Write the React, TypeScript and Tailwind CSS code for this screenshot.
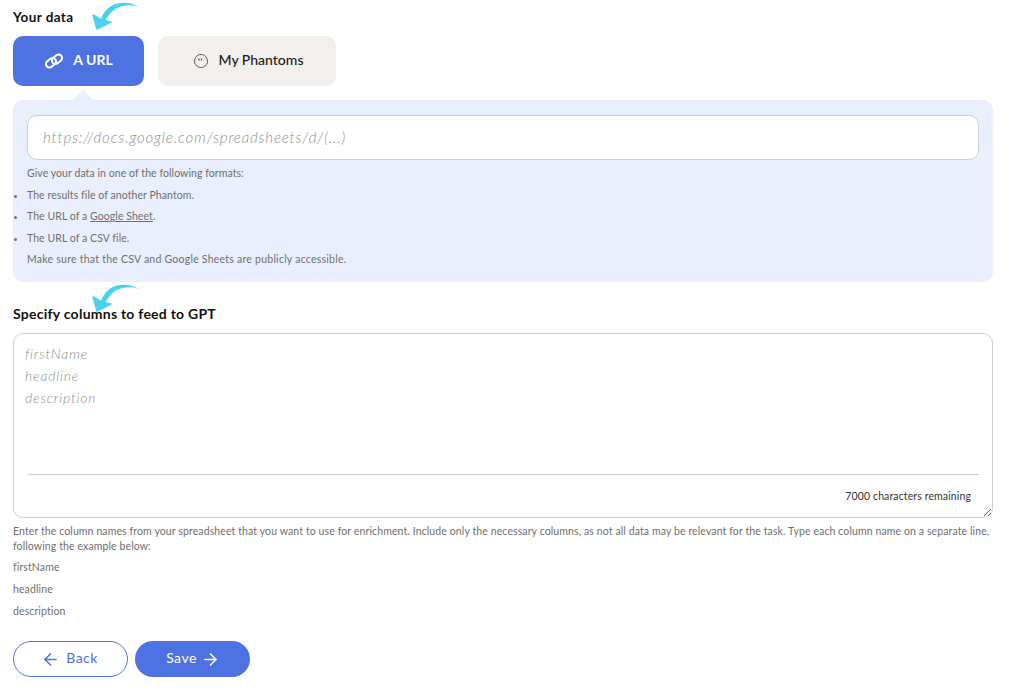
import { ArrowLeft, ArrowRight } from "lucide-react";

function CurvedArrow({ className }: { className: string }) {
  return (
    <svg className={className} width="48" height="32" viewBox="0 0 48 32" fill="#4fd0f0">
      <path d="M48 7C40 2 28 1 20 6C14 10 11 15 9 22L13 24C15 18 19 13 24 9C31 5 40 4 48 7Z" />
      <path d="M2 15L6 29L20 22L11 20Z" stroke="#4fd0f0" strokeWidth="1.5" strokeLinejoin="round" />
    </svg>
  );
}

function ChainIcon() {
  return (
    <svg width="20" height="16" viewBox="0 0 20 16" fill="none" stroke="white" strokeWidth="2">
      <rect x="1.5" y="6.2" width="11" height="7" rx="3.5" transform="rotate(-38 7 9.7)" />
      <rect x="7.5" y="2.8" width="11" height="7" rx="3.5" transform="rotate(-38 13 6.3)" />
    </svg>
  );
}

function GhostIcon() {
  return (
    <svg width="16" height="16" viewBox="0 0 16 16" fill="none" stroke="#333" strokeWidth="0.8">
      <path d="M1.5 9C1.5 4.5 4 1.5 8 1.5S14.5 4.5 14.5 9C14.5 10 13.8 10.5 13.5 11.5C13 13 12 12.5 11 13.5C10 14.5 9 14.5 8 14.5S6 14.5 5 13.5C4 12.5 3 13 2.5 11.5C2.2 10.5 1.5 10 1.5 9Z" />
      <path d="M6 6V7M8.4 6V7" strokeWidth="1.1" strokeLinecap="round" />
    </svg>
  );
}

export default function App() {
  return (
    <div className="h-[692px] w-[1009px] overflow-hidden bg-white pl-[13px] pr-[16px] font-['Lato',sans-serif] text-[#6f6f6f]">
      {/* data source */}
      <div className="relative flex h-[36px] items-center pb-[2px]">
        <h2 className="text-[13.5px] font-bold tracking-[0.4px] text-[#111]">Your data</h2>
        <CurvedArrow className="absolute left-[78px] top-0" />
      </div>

      <div className="flex gap-[14px]">
        <button className="flex h-[50px] w-[131px] items-center justify-center gap-[9px] rounded-[10px] bg-[#4f72e3] text-[14px] font-bold text-white">
          <ChainIcon />
          <span className="pb-[3px]">A URL</span>
        </button>
        <button className="flex h-[50px] w-[178px] items-center justify-center gap-[10px] rounded-[10px] bg-[#f3efec] pl-[2px] text-[14px] font-medium text-[#222]">
          <GhostIcon />
          <span className="pb-[3px]">My Phantoms</span>
        </button>
      </div>

      <div className="relative mt-[14px] h-[182px] rounded-[10px] bg-[#e9effc] px-[14px] pt-[15px]">
        <div className="absolute left-[63px] top-[-7px] h-[14px] w-[14px] rotate-45 bg-[#e9effc]" />
        <input
          className="relative h-[45px] w-full rounded-[10px] border border-[#cfcfcf] bg-white px-[15px] pb-[2px] text-[15px] font-light italic tracking-[0.85px] outline-none placeholder:text-[#909090]"
          placeholder="https://docs.google.com/spreadsheets/d/(...)"
        />
        <div className="mt-[3px] text-[10.5px] leading-[21.5px] tracking-[0.07px]">
          <p>Give your data in one of the following formats:</p>
          <ul className="list-outside list-disc">
            <li>The results file of another Phantom.</li>
            <li>
              The URL of a <span className="underline">Google Sheet</span>.
            </li>
            <li>The URL of a CSV file.</li>
          </ul>
          <p className="tracking-[0.24px]">Make sure that the CSV and Google Sheets are publicly accessible.</p>
        </div>
      </div>

      {/* columns */}
      <div className="relative flex h-[51px] items-end pb-[10px]">
        <h2 className="text-[14px] font-bold leading-[18px] tracking-[0.25px] text-[#111]">Specify columns to feed to GPT</h2>
        <CurvedArrow className="absolute left-[78px] top-0" />
      </div>

      <div className="relative h-[185px]">
        <textarea
          className="block h-[185px] w-full resize-y rounded-[10px] border border-[#cfcfcf] bg-white px-[11px] py-[9px] text-[14px] font-light italic leading-[22px] tracking-[0.8px] outline-none placeholder:text-[#909090]"
          placeholder={"firstName\nheadline\ndescription"}
        />
        <div className="absolute bottom-0 left-[15px] right-[14px] h-[44px] border-t border-[#cfcfcf] pt-[14px] pr-[8px] text-right text-[10.5px] leading-[14px] tracking-[0.12px] text-[#333]">
          7000 characters remaining
        </div>
      </div>

      <div className="mt-[6px] text-[10.5px] tracking-[0.11px] text-[#6f6f6f]">
        <p className="leading-[15px]">
          Enter the column names from your spreadsheet that you want to use for enrichment. Include only the necessary columns, as not all data may be relevant for the task. Type each column name on a separate line, following the example below:
        </p>
        <p className="mt-[2px] leading-[22px]">firstName</p>
        <p className="leading-[22px]">headline</p>
        <p className="leading-[22px]">description</p>
      </div>

      <div className="mt-[19px] flex gap-[7px]">
        <button className="flex h-[36px] w-[115px] items-center justify-center gap-[6px] rounded-full border border-[#4f72e3] bg-white pr-[2px] text-[14px] tracking-[0.4px] text-[#4f72e3]">
          <ArrowLeft size={19} strokeWidth={2} />
          <span className="pb-[3px]">Back</span>
        </button>
        <button className="flex h-[36px] w-[115px] items-center justify-center gap-[4px] rounded-full bg-[#4f72e3] pl-[1px] text-[14px] tracking-[0.5px] text-white">
          <span className="pb-[3px]">Save</span>
          <ArrowRight size={19} strokeWidth={2} />
        </button>
      </div>
    </div>
  );
}
